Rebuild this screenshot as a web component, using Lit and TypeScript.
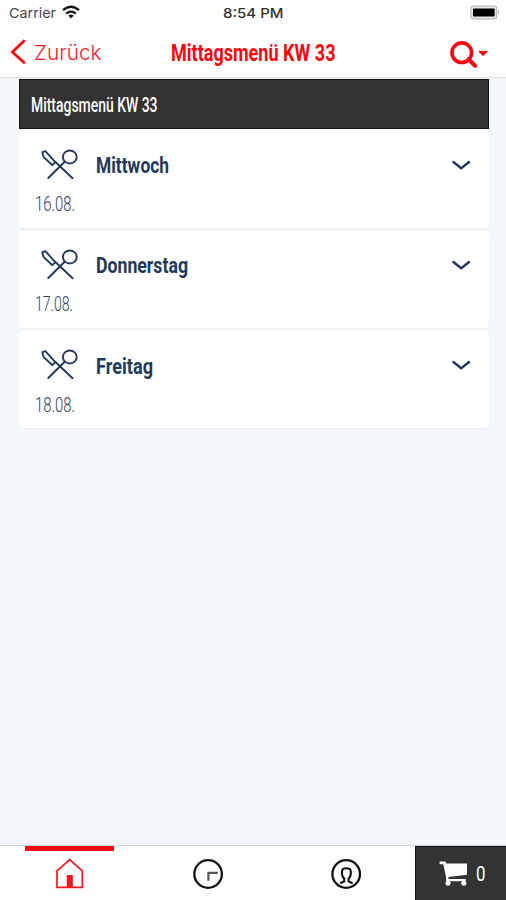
import { LitElement, html, css, svg } from "lit";
import { customElement, property } from "lit/decorators.js";

/** A single line of text condensed to a fixed width. */
@customElement("narrow-text")
class NarrowText extends LitElement {
  @property() text = "";
  @property({ type: Number }) width = 0;
  @property({ type: Number }) height = 24;
  @property({ type: Number }) baseline = 18;
  static styles = css`
    :host { display: block; flex: none; }
    svg { display: block; overflow: visible; }
    text { fill: currentColor; }
  `;
  render() {
    return html`<svg width=${this.width} height=${this.height}>
      ${svg`<text x="0" y=${this.baseline} textLength=${this.width} lengthAdjust="spacingAndGlyphs">${this.text}</text>`}
    </svg>`;
  }
}

@customElement("day-card")
class DayCard extends LitElement {
  @property() day = "";
  @property() date = "";
  @property({ type: Number }) dayWidth = 0;
  @property({ type: Number }) dateWidth = 0;
  static styles = css`
    :host {
      display: block; box-sizing: border-box; height: 97.3px; background: #fff;
      border-radius: 4px; padding: 15.5px 18px 0 16px; color: #23395a;
      box-shadow: 0 1px 2px rgba(40, 50, 70, 0.05);
    }
    :host(:first-of-type) { height: 98.8px; padding-top: 17px; border-radius: 0 0 4px 4px; }
    .top { display: flex; height: 37px; }
    .cutlery { margin: 0.8px 0 0 6px; flex: none; }
    .day { font: 700 21.5px Roboto, sans-serif; margin-left: 18.5px; }
    .chevron { margin: 12.7px 1px 0 auto; flex: none; }
    .date { font: 300 19.5px Roboto, sans-serif; color: #2f3d55; }
    svg { display: block; overflow: visible; fill: none; stroke: currentColor; }
  `;
  render() {
    return html`
      <div class="top">
        <svg class="cutlery" width="37" height="34" stroke-width="1.9" stroke-linecap="round" stroke-linejoin="round">
          <ellipse cx="28.8" cy="10" rx="6.9" ry="6.5"></ellipse>
          <path d="M23.7 14.8 L7.3 31 M31.6 31.3 L13.6 14.3 L4.4 4.2 L1.4 5.2 Q1.4 8 3 10.4 L11.4 18.2 L14.2 15.4"></path>
        </svg>
        <narrow-text class="day" .text=${this.day} .width=${this.dayWidth} .height=${32} .baseline=${26.8}></narrow-text>
        <svg class="chevron" width="19" height="12" stroke-width="2.4" stroke-linecap="round" stroke-linejoin="round">
          <path d="M2.4 3 L10.2 9.3 L18 3"></path>
        </svg>
      </div>
      <narrow-text class="date" .text=${this.date} .width=${this.dateWidth} .height=${26} .baseline=${27.8}></narrow-text>
    `;
  }
}

@customElement("app-root")
class AppRoot extends LitElement {
  static styles = css`
    :host {
      display: flex; flex-direction: column; width: 506px; height: 900px;
      background: #f4f7fb; overflow: hidden; font-family: Inter, sans-serif;
    }
    svg { display: block; overflow: visible; flex: none; }
    .status { display: flex; height: 27px; background: #fff; color: #333; flex: none; }
    .carrier { font: 400 13.5px Inter, sans-serif; margin-left: 9px; color: #484848; }
    .wifi { margin: 5px 0 0 6px; }
    .time { font: 500 13.5px Inter, sans-serif; margin-left: 143px; color: #303030; }
    .battery { margin: 5px 6px 0 auto; }
    .nav { display: flex; height: 50px; background: #fff; border-bottom: 1px solid #dedfe1; color: #fb0510; flex: none; }
    .back { margin: 12px 0 0 10px; }
    .back-label { font: 300 20.5px Inter, sans-serif; margin-left: 8px; color: #f8202b; }
    .title { font: 700 23px Roboto, sans-serif; margin-left: 69.5px; }
    .search { margin: 13px 17px 0 auto; }
    .list { flex: 1; display: flex; flex-direction: column; gap: 3px; padding: 1px 17.5px 0 18.5px; }
    .heading {
      box-sizing: border-box; height: 50px; background: #333; border: 1px solid #111;
      padding-left: 11.5px; color: #fff; margin-bottom: -3px; font: 500 20px Roboto, sans-serif;
    }
    .tabs { display: flex; height: 54px; background: #fff; border-top: 1px solid #d3d6da; flex: none; }
    .tab { width: 138.4px; display: flex; flex-direction: column; align-items: center; }
    .marker { width: 89px; height: 4.5px; background: transparent; flex: none; }
    .active .marker { background: #f80a12; }
    .tab svg { margin-top: 7.3px; }
    .cart {
      flex: 1; display: flex; background: #333; color: #fff; box-sizing: border-box;
      border-left: 1px solid #111; border-top: 1px solid #111; padding-left: 22.5px;
    }
    .cart svg { margin-top: 14px; }
    .count { font: 400 21px Roboto, sans-serif; margin-left: 9.5px; }
  `;
  render() {
    return html`
      <div class="status">
        <narrow-text class="carrier" text="Carrier" .width=${47} .height=${26} .baseline=${18}></narrow-text>
        <svg class="wifi" width="18" height="14" fill="none" stroke="#151515" stroke-width="2.3">
          <path d="M1 5.2 Q9 -1.8 17 5.2 M4.2 8.7 Q9 4.5 13.8 8.7"></path>
          <path d="M6.3 10.6 Q9 8.4 11.7 10.6 L9 13.4Z" fill="#151515" stroke="none"></path>
        </svg>
        <narrow-text class="time" text="8:54 PM" .width=${60.5} .height=${26} .baseline=${18}></narrow-text>
        <svg class="battery" width="30" height="15">
          <rect x="0.9" y="1.2" width="25.8" height="12.6" rx="2.6" fill="#e9e9e9" stroke="#bababa" stroke-width="1.2"></rect>
          <rect x="3" y="3.4" width="21.7" height="8.2" rx="1" fill="#000"></rect>
          <path d="M28 5.3 Q30 7.5 28 9.7Z" fill="#a9a9a9"></path>
        </svg>
      </div>
      <div class="nav">
        <svg class="back" width="16" height="26" fill="none" stroke="#fb0510" stroke-width="2.8">
          <path d="M14.8 1.3 L2.4 13 L14.8 24.2"></path>
        </svg>
        <narrow-text class="back-label" text="Zurück" .width=${67.5} .height=${40} .baseline=${32.7}></narrow-text>
        <narrow-text class="title" text="Mittagsmenü KW 33" .width=${164.5} .height=${40} .baseline=${33.8}></narrow-text>
        <svg class="search" width="39" height="29">
          <circle cx="11.8" cy="12.7" r="9.8" fill="none" stroke="#fb0510" stroke-width="3.6"></circle>
          <path d="M18.6 19.4 L25.2 25.8" stroke="#fb0510" stroke-width="4.2" stroke-linecap="round"></path>
          <path d="M28.8 11.4 H37.4 L33.1 15.6Z" fill="#fb0510" stroke="#fb0510" stroke-linejoin="round"></path>
        </svg>
      </div>
      <div class="list">
        <div class="heading">
          <narrow-text text="Mittagsmenü KW 33" .width=${126.5} .height=${40} .baseline=${31.5}></narrow-text>
        </div>
        <day-card day="Mittwoch" date="16.08." .dayWidth=${73} .dateWidth=${40}></day-card>
        <day-card day="Donnerstag" date="17.08." .dayWidth=${92} .dateWidth=${38}></day-card>
        <day-card day="Freitag" date="18.08." .dayWidth=${57} .dateWidth=${40}></day-card>
      </div>
      <div class="tabs">
        <div class="tab active">
          <div class="marker"></div>
          <svg width="30" height="32" fill="none" stroke="#f8141c" stroke-width="1.7">
            <path d="M3 29.4 V12.8 L15.7 1.7 L28.3 12.8 V29.4Z"></path>
            <rect x="12.8" y="17" width="6" height="12.4" fill="#f8141c" stroke="none"></rect>
          </svg>
        </div>
        <div class="tab">
          <div class="marker"></div>
          <svg width="30" height="32" fill="none">
            <circle cx="15.1" cy="16" r="13.8" stroke="#111" stroke-width="2.3"></circle>
            <path d="M15.4 22.8 V14.9 H24.8" stroke="#555" stroke-width="2.2"></path>
          </svg>
        </div>
        <div class="tab">
          <div class="marker"></div>
          <svg width="30" height="32" fill="none" stroke="#111" stroke-width="2.1">
            <circle cx="15.2" cy="16" r="13.8" stroke-width="2.3"></circle>
            <path d="M9.2 25.3 L13.2 23.4 V20.6 Q11 18.6 11 15.4 V13.4 Q11 10.2 15.4 10.2 Q19.8 10.2 19.8 13.4 V15.4 Q19.8 18.6 17.6 20.6 V23.4 L21.6 25.3"></path>
          </svg>
        </div>
        <div class="cart">
          <svg width="28" height="28" fill="#fff">
            <path d="M0.4 1.5 Q0.4 0.4 1.5 0.4 H6 Q7 0.4 7.2 2.4 H28 V13.7 L9.4 16.1 V18 H26.7 V20.3 H8.2 Q6.7 20.3 7 18.7 L7.3 17.3 L4.3 3.2 H1.5 Q0.4 3.2 0.4 1.5Z"></path>
            <circle cx="9.1" cy="22.3" r="2.5"></circle>
            <circle cx="24.8" cy="22.3" r="2.5"></circle>
          </svg>
          <narrow-text class="count" text="0" .width=${9.5} .height=${40} .baseline=${34}></narrow-text>
        </div>
      </div>
    `;
  }
}
